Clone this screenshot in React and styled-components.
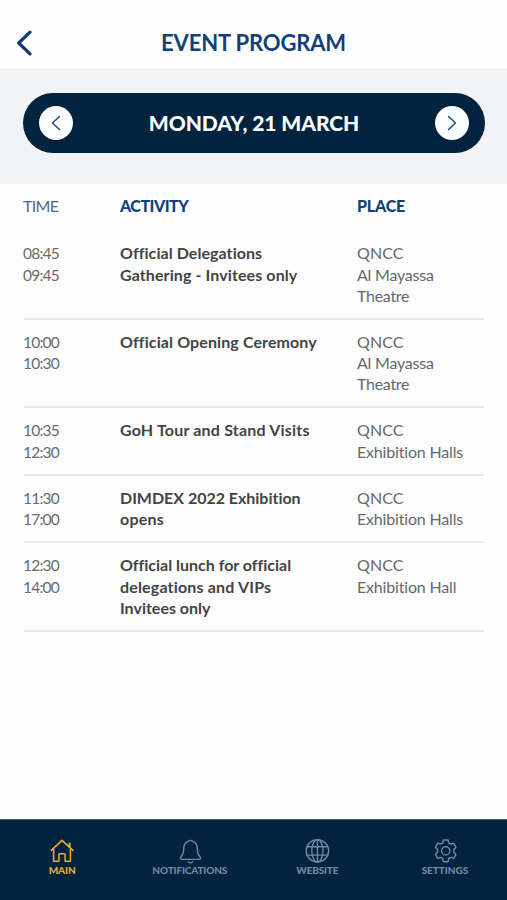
import React from 'react';
import styled, { createGlobalStyle } from 'styled-components';

const GlobalStyle = createGlobalStyle`
  *, *::before, *::after { box-sizing: border-box; }
  body {
    margin: 0;
    background: #fdfdfd;
    font-family: Lato, 'Liberation Sans', sans-serif;
  }
  button { border: 0; padding: 0; background: none; font: inherit; }
`;

const Screen = styled.div`
  display: flex;
  flex-direction: column;
  height: 900px;
  overflow: hidden;
`;

const Header = styled.header`
  display: grid;
  grid-template-columns: 48px 1fr 48px;
  align-items: center;
  height: 70px;
  padding-top: 17px;
  background: #fefefe;
  border-bottom: 1px solid #e9ebec;
`;

const BackButton = styled.button`
  display: flex;
  align-items: center;
  height: 52px;
  padding-left: 15px;
  color: #0b3a75;
`;

const Title = styled.h1`
  margin: 0;
  font-size: 22px;
  line-height: 28px;
  font-weight: 700;
  letter-spacing: -0.15px;
  text-align: center;
  white-space: nowrap;
  color: #14407a;
`;

const DateBand = styled.section`
  height: 114px;
  padding: 23px 22px 0 23px;
  background: #f1f3f5;
`;

const DatePill = styled.div`
  display: flex;
  align-items: center;
  justify-content: space-between;
  height: 60px;
  padding: 0 16px;
  border-radius: 30px;
  background: #02233e;
`;

const RoundButton = styled.button`
  display: flex;
  align-items: center;
  justify-content: center;
  width: 34px;
  height: 34px;
  border-radius: 50%;
  background: #fdfeff;
  color: #1d4a7d;
`;

const DateText = styled.h2`
  margin: 0;
  font-size: 21px;
  line-height: 28px;
  font-weight: 900;
  letter-spacing: -0.07px;
  color: #fbfcfd;
`;

const Schedule = styled.main`
  flex: 1;
  padding: 0 23px;
`;

const columns = '97px 237px 1fr';

const HeadRow = styled.div`
  display: grid;
  grid-template-columns: ${columns};
  height: 47px;
  padding-top: 11px;
  font-size: 16px;
  line-height: 22px;
`;

const HeadCell = styled.div`
  font-weight: ${(p) => (p.$strong ? 900 : 400)};
  letter-spacing: ${(p) => p.$tracking}px;
  color: ${(p) => (p.$strong ? '#14407a' : '#48688f')};
`;

const EventRow = styled.div`
  display: grid;
  grid-template-columns: ${columns};
  height: ${(p) => (p.$lines === 3 ? 88.5 : 67.5)}px;
  padding-top: 11.3px;
  font-size: 16px;
  line-height: 21.3px;
  background: linear-gradient(#e7e8e9, #e7e8e9) 1px 100% / 460px 2px no-repeat;
`;

const Line = styled.div`
  letter-spacing: ${(p) => p.$tracking}px;
  white-space: nowrap;
`;

const Time = styled.div`
  padding-top: 1px;
  font-size: 15.5px;
  color: #6a6a6a;
`;

const Activity = styled.div`
  font-weight: 700;
  color: #444;
`;

const Place = styled.div`
  color: #686868;
`;

const TabBar = styled.nav`
  display: grid;
  grid-template-columns: repeat(4, 127.6px);
  justify-content: center;
  height: 81px;
  border-top: 1px solid #4a6076;
  background: #02233e;
`;

const Tab = styled.button`
  display: flex;
  flex-direction: column;
  align-items: center;
  padding-top: 18px;
  color: ${(p) => (p.$active ? '#e3b22d' : '#7189a1')};
`;

const TabLabel = styled.span`
  font-size: 10px;
  line-height: 12px;
  font-weight: 900;
  letter-spacing: ${(p) => p.$tracking}px;
`;

const Icon = styled.svg`
  display: block;
  fill: none;
  stroke: currentColor;
  stroke-linecap: round;
  stroke-linejoin: round;
`;

const HomeIcon = () => (
  <Icon width="26" height="26" viewBox="0 0 26 26" strokeWidth="1.5">
    <path d="M2.3 12.4 13 2.4l10.9 10" />
    <path d="M20.6 9V5.6" strokeWidth="2" />
    <path d="M4.6 11.6v11.6h5.3v-6.4a1 1 0 0 1 1-1h4.2a1 1 0 0 1 1 1v6.4h5.3V11.6" />
  </Icon>
);

const BellIcon = () => (
  <Icon width="26" height="26" viewBox="0 0 26 26" strokeWidth="1.4">
    <path d="M15.2 3.1a2.3 2.3 0 0 0-3.4 0C8.6 4 6.8 6.9 6.8 10.3c0 4.2-.8 6.2-2.6 8.1-1.5 1.6-.7 3 .7 3h17.2c1.4 0 2.2-1.4.7-3-1.8-1.9-2.6-3.9-2.6-8.1 0-3.4-1.8-6.3-5-7.2Z" />
    <path d="M11.3 23.8c.7 1.4 3.7 1.4 4.4 0" />
  </Icon>
);

const GlobeIcon = () => (
  <Icon width="26" height="26" viewBox="0 0 26 26" strokeWidth="1.4">
    <circle cx="13.4" cy="12.8" r="11.2" />
    <ellipse cx="13.4" cy="12.8" rx="5.6" ry="11.2" />
    <path d="M13.4 1.6V24M3 8.7h20.8M3 17.1h20.8" />
  </Icon>
);

const GearIcon = () => (
  <Icon width="26" height="26" viewBox="0 0 26 26" strokeWidth="1.4">
    <path d="M12 2h3.4a.9.9 0 0 1 .9.8l.3 2.1 2.3 1.3 2-.8a.9.9 0 0 1 1.1.4l1.7 2.9a.9.9 0 0 1-.2 1.2l-1.7 1.3v3.2l1.7 1.3a.9.9 0 0 1 .2 1.2L22 19.8a.9.9 0 0 1-1.1.4l-2-.8-2.3 1.3-.3 2.2a.9.9 0 0 1-.9.8H12a.9.9 0 0 1-.9-.8l-.3-2.2-2.3-1.3-2 .8a.9.9 0 0 1-1.1-.4l-1.7-2.9a.9.9 0 0 1 .2-1.2l1.7-1.3v-3.2L3.9 9.9a.9.9 0 0 1-.2-1.2l1.7-2.9a.9.9 0 0 1 1.1-.4l2 .8 2.3-1.3.3-2.1A.9.9 0 0 1 12 2Z" />
    <circle cx="13.7" cy="12.9" r="4.1" />
  </Icon>
);

const events = [
  {
    time: ['08:45', '09:45'],
    activity: [['Official Delegations', 0.06], ['Gathering - Invitees only', 0.1]],
    place: [['QNCC', 0.1], ['Al Mayassa', -0.22], ['Theatre', -0.28]],
  },
  {
    time: ['10:00', '10:30'],
    activity: [['Official Opening Ceremony', 0.11]],
    place: [['QNCC', 0.1], ['Al Mayassa', -0.22], ['Theatre', -0.28]],
  },
  {
    time: ['10:35', '12:30'],
    activity: [['GoH Tour and Stand Visits', 0.19]],
    place: [['QNCC', 0.1], ['Exhibition Halls', -0.18]],
  },
  {
    time: ['11:30', '17:00'],
    activity: [['DIMDEX 2022 Exhibition', -0.02], ['opens', 0.2]],
    place: [['QNCC', 0.1], ['Exhibition Halls', -0.18]],
  },
  {
    time: ['12:30', '14:00'],
    activity: [['Official lunch for official', -0.01], ['delegations and VIPs', 0.17], ['Invitees only', 0]],
    place: [['QNCC', 0.1], ['Exhibition Hall', -0.18]],
  },
];

const tabs = [
  { label: 'MAIN', icon: HomeIcon, tracking: -0.1, active: true },
  { label: 'NOTIFICATIONS', icon: BellIcon, tracking: -0.15 },
  { label: 'WEBSITE', icon: GlobeIcon, tracking: -0.2 },
  { label: 'SETTINGS', icon: GearIcon, tracking: -0.04 },
];

const renderLines = (lines) =>
  lines.map(([text, tracking]) => (
    <Line key={text} $tracking={tracking}>{text}</Line>
  ));

export default function App() {
  return (
    <Screen>
      <GlobalStyle />
      <Header>
        <BackButton aria-label="Back">
          <Icon width="18" height="26" viewBox="0 0 18 26" strokeWidth="3.2">
            <path d="M15 2.2 3.7 13 15 23.8" />
          </Icon>
        </BackButton>
        <Title>EVENT PROGRAM</Title>
      </Header>
      <DateBand>
        <DatePill>
          <RoundButton aria-label="Previous day">
            <Icon width="10" height="16" viewBox="0 0 10 16" strokeWidth="1.5">
              <path d="M8.4 1.5 1.5 8l6.9 6.5" />
            </Icon>
          </RoundButton>
          <DateText>MONDAY, 21 MARCH</DateText>
          <RoundButton aria-label="Next day">
            <Icon width="10" height="16" viewBox="0 0 10 16" strokeWidth="1.5">
              <path d="m1.6 1.5 6.9 6.5-6.9 6.5" />
            </Icon>
          </RoundButton>
        </DatePill>
      </DateBand>
      <Schedule>
        <HeadRow>
          <HeadCell $tracking={-0.7}>TIME</HeadCell>
          <HeadCell $strong $tracking={-0.5}>ACTIVITY</HeadCell>
          <HeadCell $strong $tracking={-0.2}>PLACE</HeadCell>
        </HeadRow>
        {events.map((event) => (
          <EventRow
            key={event.time[0]}
            $lines={Math.max(event.activity.length, event.place.length)}
          >
            <Time>{renderLines(event.time.map((t) => [t, -0.8]))}</Time>
            <Activity>{renderLines(event.activity)}</Activity>
            <Place>{renderLines(event.place)}</Place>
          </EventRow>
        ))}
      </Schedule>
      <TabBar>
        {tabs.map(({ label, icon: TabIcon, tracking, active }) => (
          <Tab key={label} $active={active}>
            <TabIcon />
            <TabLabel $tracking={tracking}>{label}</TabLabel>
          </Tab>
        ))}
      </TabBar>
    </Screen>
  );
}
